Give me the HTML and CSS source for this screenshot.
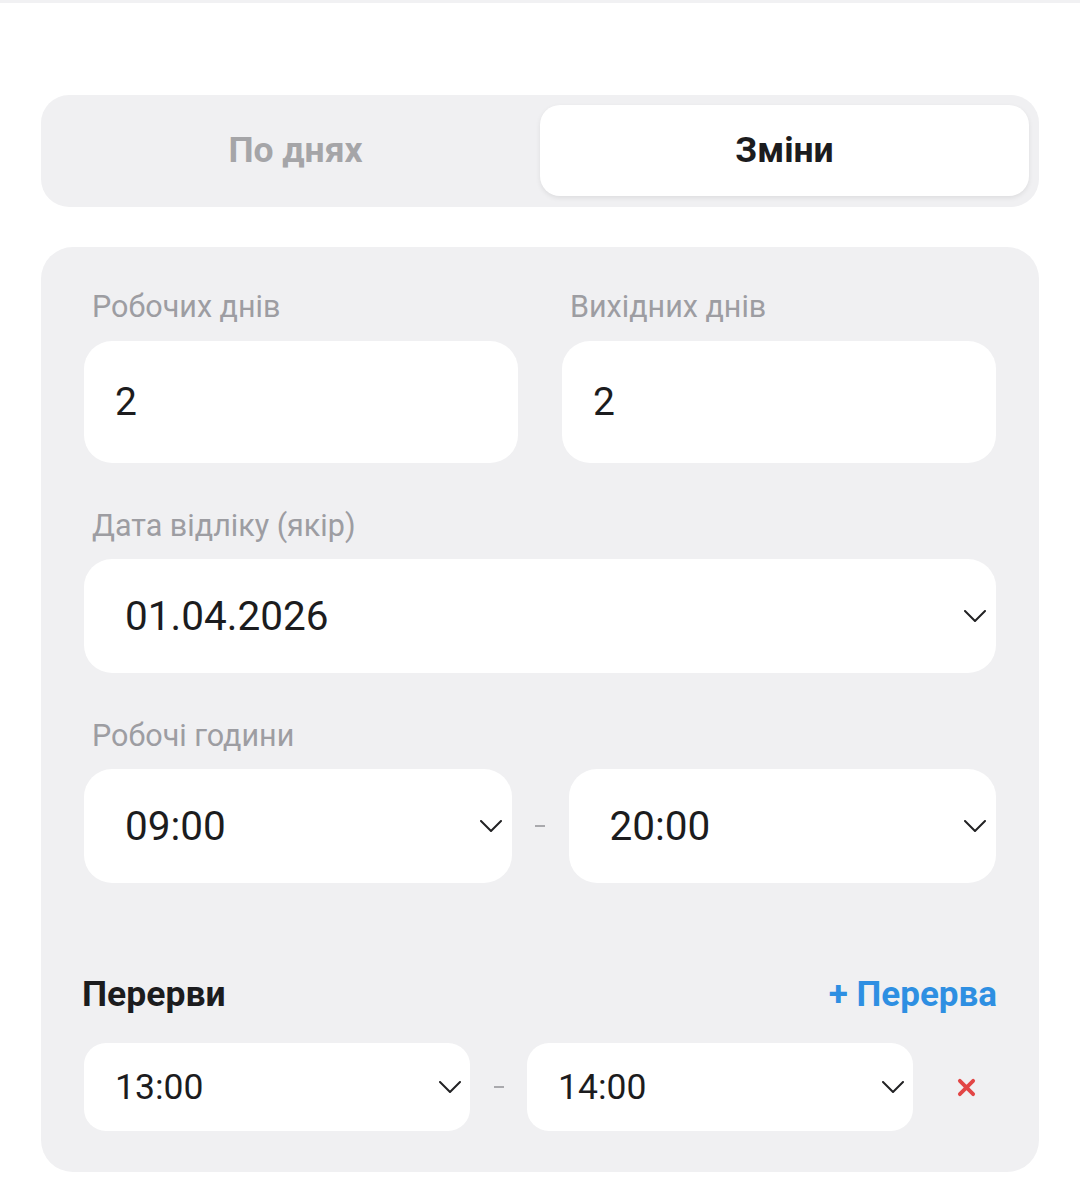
FILE: index.html
```html
<!DOCTYPE html>
<html lang="uk">
<head>
<meta charset="utf-8">
<title>Зміни</title>
<link rel="stylesheet" href="styles.css">
</head>
<body>
<div class="topline"></div>
<main class="page">
  <div class="seg">
    <button class="seg-btn">По днях</button>
    <button class="seg-btn active">Зміни</button>
  </div>

  <section class="card">
    <div class="row two">
      <div class="field">
        <div class="label">Робочих днів</div>
        <div class="input tall">2</div>
      </div>
      <div class="field">
        <div class="label">Вихідних днів</div>
        <div class="input tall">2</div>
      </div>
    </div>

    <div class="field block">
      <div class="label">Дата відліку (якір)</div>
      <div class="select big">
        <span>01.04.2026</span>
        <svg class="chev" viewBox="0 0 22 12"><path d="M1 1 L11 11 L21 1"/></svg>
      </div>
    </div>

    <div class="field block">
      <div class="label">Робочі години</div>
      <div class="range">
        <div class="select big">
          <span>09:00</span>
          <svg class="chev" viewBox="0 0 22 12"><path d="M1 1 L11 11 L21 1"/></svg>
        </div>
        <div class="dash"></div>
        <div class="select big">
          <span>20:00</span>
          <svg class="chev" viewBox="0 0 22 12"><path d="M1 1 L11 11 L21 1"/></svg>
        </div>
      </div>
    </div>

    <div class="breaks-head">
      <h2 class="breaks-title">Перерви</h2>
      <button class="add-break">+ Перерва</button>
    </div>

    <div class="break-row">
      <div class="select small">
        <span>13:00</span>
        <svg class="chev" viewBox="0 0 22 12"><path d="M1 1 L11 11 L21 1"/></svg>
      </div>
      <div class="dash"></div>
      <div class="select small">
        <span>14:00</span>
        <svg class="chev" viewBox="0 0 22 12"><path d="M1 1 L11 11 L21 1"/></svg>
      </div>
      <button class="remove" aria-label="Видалити">
        <svg viewBox="0 0 20 20"><path d="M3 3 L17 17 M17 3 L3 17"/></svg>
      </button>
    </div>
  </section>
</main>
</body>
</html>
```

FILE: styles.css
```css
* { box-sizing: border-box; }

body {
  margin: 0;
  background: #ffffff;
  font-family: Roboto, "Noto Sans", "Liberation Sans", sans-serif;
  color: #1c1c1e;
}

.topline {
  height: 3px;
  background: #f1f1f3;
}

.page {
  padding: 92px 41px 20px;
}

.seg {
  display: flex;
  height: 112px;
  padding: 10px 10px 11px;
  background: #f0f0f2;
  border-radius: 28px;
}

.seg-btn {
  flex: 1;
  border: 0;
  background: transparent;
  font-family: inherit;
  font-size: 35.5px;
  font-weight: 700;
  color: #a5a5a8;
  border-radius: 20px;
  padding: 0 0 2px;
}

.seg-btn.active {
  background: #ffffff;
  color: #1c1c1e;
  box-shadow: 0 2px 5px rgba(0, 0, 0, 0.08);
}

.card {
  margin-top: 40px;
  background: #f0f0f2;
  border-radius: 32px;
  padding: 42px 43px 41px;
}

.row.two {
  display: grid;
  grid-template-columns: 1fr 1fr;
  column-gap: 44px;
}

.label {
  font-size: 30.5px;
  line-height: 35px;
  color: #9d9da2;
  padding-left: 8px;
  margin-bottom: 17px;
}

.field.block {
  margin-top: 45px;
}

.block .label {
  margin-bottom: 16px;
}

.input {
  background: #ffffff;
  border-radius: 28px;
  display: flex;
  align-items: center;
  padding-left: 31px;
  font-size: 39px;
  color: #1c1c1e;
}

.input.tall {
  height: 122px;
}

.select {
  background: #ffffff;
  border-radius: 28px;
  display: flex;
  align-items: center;
  justify-content: space-between;
  color: #1c1c1e;
}

.select.big {
  height: 114px;
  padding: 0 10px 0 41px;
  font-size: 40.5px;
}

.select.small {
  height: 88px;
  padding: 0 9px 0 31px;
  font-size: 35.5px;
  border-radius: 22px;
}

.chev {
  width: 22px;
  height: 12px;
  fill: none;
  stroke: #222224;
  stroke-width: 2;
  stroke-linecap: round;
  stroke-linejoin: round;
}

.range {
  display: grid;
  grid-template-columns: 1fr 57px 1fr;
  align-items: center;
}

.dash {
  width: 10px;
  height: 2.5px;
  background: #a9a9ad;
  justify-self: center;
}

.breaks-head {
  margin-top: 91px;
  display: flex;
  justify-content: space-between;
  align-items: center;
  height: 40px;
}

.breaks-title {
  margin: 0 0 0 -2px;
  font-size: 35.5px;
  font-weight: 700;
  color: #1c1c1e;
  line-height: 40px;
}

.add-break {
  border: 0;
  background: transparent;
  padding: 0;
  margin-right: -1px;
  font-family: inherit;
  font-size: 35px;
  font-weight: 700;
  color: #2e8fe2;
}

.break-row {
  margin-top: 29px;
  display: grid;
  grid-template-columns: 386px 57px 386px 23px 60px;
  align-items: center;
}

.remove {
  grid-column: 5;
  border: 0;
  background: transparent;
  padding: 0;
  height: 60px;
  display: flex;
  align-items: center;
  justify-content: center;
}

.remove svg {
  width: 19px;
  height: 19px;
  fill: none;
  stroke: #e24646;
  stroke-width: 4;
  stroke-linecap: round;
}
```
